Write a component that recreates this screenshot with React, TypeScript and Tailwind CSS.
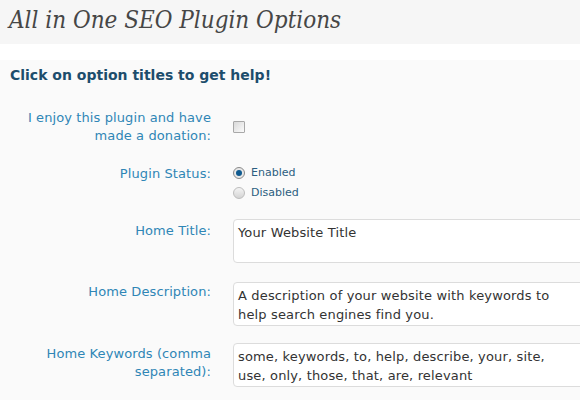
import React from "react";

const label = "w-[211px] shrink-0 text-right text-[13px] leading-[18px] tracking-[0.1px] text-[#2f86b6]";

function Box({ children }: { children: React.ReactNode }) {
  return (
    <div className="ml-[22px] w-[400px] h-[44px] shrink-0 border border-[#dcdcdc] rounded-l-[4px] bg-white pl-[4px] pt-[3px] text-[13px] leading-[19px] tracking-[0.15px] text-[#333]">
      {children}
    </div>
  );
}

export default function App() {
  return (
    <div className="w-[580px] h-[400px] overflow-hidden bg-[#fafafa]" style={{ fontFamily: "'DejaVu Sans', Verdana, sans-serif" }}>
      <div className="h-[44px] bg-[#f6f6f6] pl-[9px] pt-[5px]">
        <h1 className="text-[24px] leading-[30px] italic text-[#464646]" style={{ fontFamily: "'DejaVu Serif Condensed', 'DejaVu Serif', Georgia, serif" }}>
          All in One SEO Plugin Options
        </h1>
      </div>
      <div className="h-[16px] bg-white" />
      <div className="pl-[10px] pt-[6px] text-[14px] leading-[18px] font-bold text-[#1d4d6c]">
        Click on option titles to get help!
      </div>
      <div className="mt-[25px] flex items-center">
        <div className={label}>
          I enjoy this plugin and have
          <br />
          made a donation:
        </div>
        <div className="ml-[22px] w-[12px] h-[12px] border border-[#a8a8a8] rounded-[1px] bg-gradient-to-br from-[#d9d9d9] to-[#fbfbfb]" />
      </div>
      <div className="mt-[18px] flex items-start">
        <div className={`${label} mt-[2px]`}>Plugin Status:</div>
        <div className="ml-[22px] flex flex-col text-[11px] leading-[20px] text-[#2c5e80]">
          <div className="flex items-center gap-[6px]">
            <span className="w-[12px] h-[12px] rounded-full border border-[#8a8a8a] bg-[#e8e8e8] flex items-center justify-center">
              <span className="w-[6px] h-[6px] rounded-full bg-[#0f5a8f]" />
            </span>
            Enabled
          </div>
          <div className="flex items-center gap-[6px]">
            <span className="w-[12px] h-[12px] rounded-full border border-[#bdbdbd] bg-gradient-to-b from-[#f4f4f4] to-[#d4d4d4]" />
            Disabled
          </div>
        </div>
      </div>
      <div className="mt-[16px] flex items-start">
        <div className={`${label} mt-[3px]`}>Home Title:</div>
        <Box>Your Website Title</Box>
      </div>
      <div className="mt-[19px] flex items-start">
        <div className={`${label} mt-[1px]`}>Home Description:</div>
        <Box>
          A description of your website with keywords to
          <br />
          help search engines find you.
        </Box>
      </div>
      <div className="mt-[17px] flex items-start">
        <div className={`${label} mt-[2px]`}>
          Home Keywords (comma
          <br />
          separated):
        </div>
        <Box>
          some, keywords, to, help, describe, your, site,
          <br />
          use, only, those, that, are, relevant
        </Box>
      </div>
    </div>
  );
}
